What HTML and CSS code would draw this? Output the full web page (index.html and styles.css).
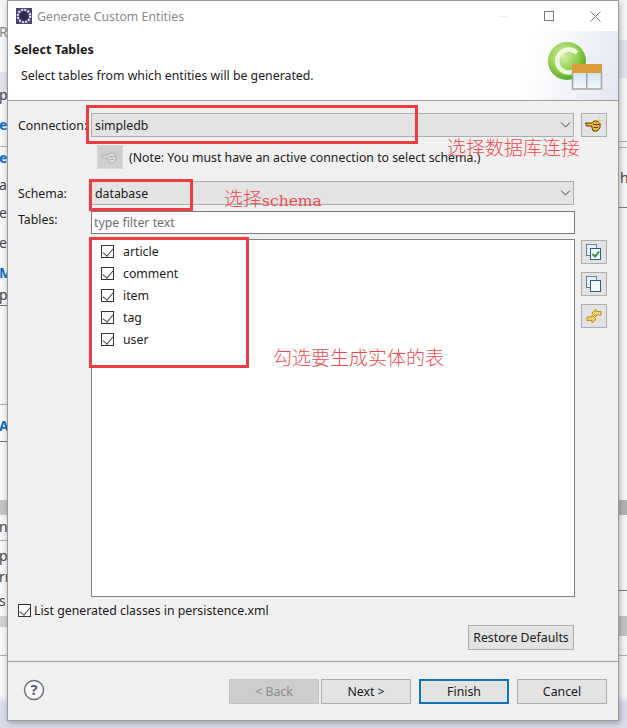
FILE: index.html
```html
<!DOCTYPE html>
<html lang="en">

<head>
    <meta charset="UTF-8">
    <title>Generate Custom Entities</title>
    <link rel="stylesheet" href="styles.css">
</head>

<body>
    <!-- bits of the IDE behind the dialog -->
    <div class="backdrop">
        <div class="band l1"></div>
        <div class="band l2"></div>
        <div class="band l3"></div>
        <div class="band r1"></div>
        <div class="band r2"></div>
        <div class="band r3"></div>
        <div class="rule rl1"></div>
        <div class="rule rl2"></div>
        <div class="rule rl3"></div>
        <div class="rule rl4"></div>
        <div class="rule rl5"></div>
        <div class="rule rl6"></div>
        <div class="rule rr1"></div>
        <div class="rule rr2"></div>
        <div class="rule rr3"></div>
        <div class="rule rr4"></div>
        <div class="rule rr5"></div>
        <span class="bg-text t1">Ru</span>
        <span class="bg-text t2">p</span>
        <span class="bg-text blue t3">er</span>
        <span class="bg-text blue t4">er</span>
        <span class="bg-text t5">a</span>
        <span class="bg-text t6">er</span>
        <span class="bg-text t7">es</span>
        <span class="bg-text blue t8">M</span>
        <span class="bg-text t9">p</span>
        <span class="bg-text blue t10">Al</span>
        <span class="bg-text t11">n</span>
        <span class="bg-text t12">p</span>
        <span class="bg-text t13">rr</span>
        <span class="bg-text t14">s</span>
        <span class="bg-text t15">hi</span>
    </div>

    <div class="window">
        <div class="titlebar">
            <svg class="app-icon" width="16" height="16" viewBox="0 0 16 16">
                <rect width="16" height="16" fill="#4a4470" />
                <circle cx="8" cy="8" r="6.2" fill="none" stroke="#e8e8ee" stroke-width="2" stroke-dasharray="2 1.2" />
                <circle cx="8" cy="8" r="4.2" fill="#2c2a50" />
            </svg>
            <span class="title">Generate Custom Entities</span>
            <div class="window-controls">
                <span class="minimize"></span>
                <span class="maximize"></span>
                <svg width="11" height="11" viewBox="0 0 11 11">
                    <path d="M0.5 0.5 L10.5 10.5 M10.5 0.5 L0.5 10.5" stroke="#777" fill="none" />
                </svg>
            </div>
        </div>

        <div class="header">
            <div class="header-text">
                <h1>Select Tables</h1>
                <p>Select tables from which entities will be generated.</p>
            </div>
            <svg class="wizard-icon" width="58" height="50" viewBox="0 0 58 50">
                <defs>
                    <radialGradient id="ball" cx="0.4" cy="0.35" r="0.7">
                        <stop offset="0" stop-color="#d8f0b0" />
                        <stop offset="0.6" stop-color="#8ccd48" />
                        <stop offset="1" stop-color="#4f9f22" />
                    </radialGradient>
                    <linearGradient id="cell" x1="0" y1="0" x2="0" y2="1">
                        <stop offset="0" stop-color="#cfe4f4" />
                        <stop offset="1" stop-color="#f2f7fb" />
                    </linearGradient>
                </defs>
                <circle cx="20" cy="20" r="19" fill="url(#ball)" />
                <path d="M30 12 A11.5 11.5 0 1 0 30 28" fill="none" stroke="#eef9dc" stroke-width="4.5" />
                <rect x="25.5" y="31" width="29" height="17" fill="url(#cell)" stroke="#a5a59c" stroke-width="1.5" />
                <rect x="25" y="23" width="30" height="9" fill="#dd9c3c" />
                <rect x="39" y="32" width="1.5" height="16" fill="#a5a59c" />
            </svg>
        </div>

        <div class="content">
            <div class="form-row connection-row">
                <label>Connection:</label>
                <div class="combo">simpledb<svg class="chevron" width="11" height="6" viewBox="0 0 11 6"><path d="M1 0.5 L5.5 5 L10 0.5" fill="none" stroke="#444" /></svg></div>
                <button class="icon-btn">
                    <svg width="18" height="14" viewBox="0 0 18 14">
                        <path d="M0.5 5 H7 L9 3 H12 L15 5 V10 L12 13 H8 L6.5 8 H1.5 Z" fill="#ecb82e" stroke="#5a3d05" />
                        <path d="M8 6.5 H14 M8.5 9.5 H13" stroke="#5a3d05" />
                        <path d="M14.5 0 V5 M12 2.5 H17" stroke="#f6d860" />
                    </svg>
                </button>
            </div>
            <div class="note-row">
                <button class="icon-btn disabled">
                    <svg width="18" height="14" viewBox="0 0 18 14">
                        <path d="M0.5 5 H7 L9 3 H12 L15 5 V10 L12 13 H8 L6.5 8 H1.5 Z" fill="#dadada" stroke="#b0b0b0" />
                        <path d="M8 6.5 H14 M8.5 9.5 H13" stroke="#b0b0b0" />
                    </svg>
                </button>
                <span>(Note: You must have an active connection to select schema.)</span>
            </div>
            <div class="form-row schema-row">
                <label>Schema:</label>
                <div class="combo">database<svg class="chevron" width="11" height="6" viewBox="0 0 11 6"><path d="M1 0.5 L5.5 5 L10 0.5" fill="none" stroke="#444" /></svg></div>
            </div>
            <div class="form-row filter-row">
                <label>Tables:</label>
                <div class="filter-input">type filter text</div>
            </div>
            <div class="tables-row">
                <div class="table-list">
                    <div class="table-item"><span class="check"></span>article</div>
                    <div class="table-item"><span class="check"></span>comment</div>
                    <div class="table-item"><span class="check"></span>item</div>
                    <div class="table-item"><span class="check"></span>tag</div>
                    <div class="table-item"><span class="check"></span>user</div>
                </div>
                <div class="side-buttons">
                    <button class="icon-btn">
                        <svg width="18" height="18" viewBox="0 0 18 18">
                            <rect x="1.5" y="1.5" width="10" height="11" fill="#e8f0f8" stroke="#5f7f9f" />
                            <rect x="5.5" y="5.5" width="10" height="11" fill="#f4f8fb" stroke="#35597c" />
                            <path d="M7.5 11 L10 13.5 L14 8.5" fill="none" stroke="#2f9a2f" stroke-width="2" />
                        </svg>
                    </button>
                    <button class="icon-btn">
                        <svg width="18" height="18" viewBox="0 0 18 18">
                            <rect x="1.5" y="1.5" width="10" height="11" fill="#e8f0f8" stroke="#5f7f9f" />
                            <rect x="5.5" y="5.5" width="10" height="11" fill="#f4f8fb" stroke="#35597c" />
                        </svg>
                    </button>
                    <button class="icon-btn">
                        <svg width="18" height="18" viewBox="0 0 18 18">
                            <path d="M7 6 L11 2 V4.5 H16 V8 H11 V10 Z" fill="#f3d368" stroke="#b98f1e" />
                            <path d="M11 12 L7 16 V13.5 H2 V10 H7 V8 Z" fill="#f3d368" stroke="#b98f1e" />
                        </svg>
                    </button>
                </div>
            </div>
            <div class="persist-row"><span class="check"></span>List generated classes in persistence.xml</div>
            <div class="restore-row"><button class="btn">Restore Defaults</button></div>
        </div>

        <div class="footer">
            <svg width="22" height="22" viewBox="0 0 22 22">
                <circle cx="11" cy="11" r="9.5" fill="#f7f7f9" stroke="#6f7480" stroke-width="1.5" />
                <text class="help-mark" x="11" y="16" text-anchor="middle">?</text>
            </svg>
            <div class="footer-buttons">
                <button class="btn btn-disabled">&lt; Back</button>
                <button class="btn">Next &gt;</button>
                <button class="btn btn-default">Finish</button>
                <button class="btn">Cancel</button>
            </div>
        </div>
    </div>

    <!-- screenshot annotations -->
    <div class="mark mark-connection"></div>
    <div class="mark mark-schema"></div>
    <div class="mark mark-tables"></div>
    <span class="note-red note-connection">选择数据库连接</span>
    <span class="note-red note-schema">选择<span class="latin">schema</span></span>
    <span class="note-red note-tables">勾选要生成实体的表</span>
</body>

</html>
```

FILE: styles.css
```css
* {
    box-sizing: border-box;
}

body {
    margin: 0;
    width: 627px;
    height: 728px;
    font-family: 'Noto Sans', sans-serif;
    font-size: 12.3px;
    color: #1a1a1a;
    position: relative;
    overflow: hidden;
}

.backdrop {
    position: absolute;
    inset: 0;
    background: linear-gradient(#f7f7f9 0, #f7f7f9 696px, #d9dcea 704px);
}

.band {
    position: absolute;
    width: 9px;
    background-color: #c4c4c6;
}

.l1 { left: 0; top: 72px; height: 26px; background-color: #e4e5ea; }
.l2 { left: 0; top: 500px; height: 15px; }
.l3 { left: 0; top: 616px; height: 11px; background-color: #d2d2d2; }
.r1 { right: 0; top: 40px; height: 38px; background-color: #e2e5ef; }
.r2 { right: 0; top: 500px; height: 15px; background-color: #b4b4b4; }
.r3 { right: 0; top: 616px; height: 20px; background-color: #c4c4c4; }

.rule {
    position: absolute;
    width: 9px;
    height: 1px;
    background-color: #b0b0b0;
}

.rl1 { left: 0; top: 146px; }
.rl2 { left: 0; top: 305px; background-color: #777; }
.rl3 { left: 0; top: 404px; }
.rl4 { left: 0; top: 441px; background-color: #777; }
.rl5 { left: 0; top: 540px; }
.rl6 { left: 0; top: 655px; }
.rr1 { right: 0; top: 141px; }
.rr2 { right: 0; top: 147px; }
.rr3 { right: 0; top: 207px; background-color: #777; }
.rr4 { right: 0; top: 590px; background-color: #777; }
.rr5 { right: 0; top: 655px; }

.bg-text {
    position: absolute;
    left: -1px;
    font-size: 14px;
    line-height: 18px;
    color: #444;
}

.bg-text.blue {
    color: #0b6fc2;
    font-weight: bold;
}

.t1 { top: 23px; color: #888; }
.t2 { top: 86px; }
.t3 { top: 116px; }
.t4 { top: 149px; }
.t5 { top: 176px; }
.t6 { top: 204px; }
.t7 { top: 234px; }
.t8 { top: 264px; }
.t9 { top: 286px; }
.t10 { top: 417px; }
.t11 { top: 518px; }
.t12 { top: 547px; }
.t13 { top: 568px; }
.t14 { top: 592px; }
.t15 { top: 169px; left: 620px; }

.window {
    position: relative;
    margin-left: 7px;
    width: 612px;
    height: 721px;
    background-color: #f0f0f0;
    border: 1px solid #9a9a9a;
    box-shadow: 1px 2px 6px rgba(60, 60, 70, 0.4);
    display: flex;
    flex-direction: column;
}

.titlebar {
    height: 30px;
    flex-shrink: 0;
    background-color: white;
    display: flex;
    align-items: center;
    padding-left: 8px;
}

.app-icon {
    margin-right: 5px;
}

.title {
    color: #8a8a8a;
}

.window-controls {
    margin-left: auto;
    display: flex;
    align-items: center;
    gap: 36px;
    padding-right: 17px;
}

.minimize {
    width: 10px;
    height: 1px;
    background-color: #eee;
}

.maximize {
    width: 10px;
    height: 10px;
    border: 1px solid #777;
}

.header {
    height: 70px;
    flex-shrink: 0;
    background: linear-gradient(105deg, white 84%, #e3e7f1 100%);
    border-bottom: 1px solid #a0a0a0;
    display: flex;
    justify-content: space-between;
}

.header-text {
    padding-left: 6px;
}

.header-text h1 {
    margin: 10px 0 0;
    font-size: 12.5px;
    line-height: 17px;
    font-weight: bold;
}

.header-text p {
    margin: 9px 0 0 7px;
    line-height: 17px;
}

.wizard-icon {
    margin: 10px 13px 0 0;
}

.content {
    flex: 1;
    padding: 12px 0 0 10px;
    display: flex;
    flex-direction: column;
}

.form-row {
    display: flex;
    align-items: center;
}

.form-row label {
    width: 73px;
    flex-shrink: 0;
}

.combo {
    width: 483px;
    height: 24px;
    background-color: #e3e3e3;
    border: 1px solid #adadad;
    padding: 0 2px 0 3px;
    display: flex;
    align-items: center;
    justify-content: space-between;
}

.icon-btn {
    width: 26px;
    height: 24px;
    padding: 0;
    background-color: #e3e3e3;
    border: 1px solid #adadad;
    display: flex;
    align-items: center;
    justify-content: center;
}

.icon-btn.disabled {
    background-color: #cfcfcf;
    border-color: #d8d8d8;
}

.connection-row .icon-btn {
    margin-left: 7px;
}

.note-row {
    margin: 8px 0 0 79px;
    display: flex;
    align-items: center;
    gap: 6px;
}

.schema-row {
    margin-top: 12px;
}

.filter-row {
    margin-top: 6px;
}

/* the label sits a little above the centre of its field */
.filter-row label {
    margin-bottom: 6px;
}

.filter-input {
    width: 484px;
    height: 23px;
    background-color: white;
    border: 1px solid #7a7a7a;
    padding-left: 2px;
    line-height: 21px;
    color: #6d6d6d;
}

.tables-row {
    margin: 5px 0 0 73px;
    display: flex;
    gap: 6px;
}

.table-list {
    width: 484px;
    height: 358px;
    background-color: white;
    border: 1px solid #828282;
    padding-left: 9px;
}

.table-item {
    height: 22px;
    display: flex;
    align-items: center;
}

.check {
    width: 13px;
    height: 13px;
    flex-shrink: 0;
    border: 1px solid #333;
    background-color: white;
    position: relative;
}

/* tick made from two borders */
.check::after {
    content: '';
    position: absolute;
    left: 3px;
    top: 0;
    width: 5px;
    height: 9px;
    border-right: 1.5px solid #444;
    border-bottom: 1.5px solid #444;
    transform: rotate(40deg);
}

.table-item .check {
    margin-right: 9px;
}

.side-buttons {
    margin-top: 1px;
    display: flex;
    flex-direction: column;
    gap: 8px;
}

.persist-row {
    margin-top: 6px;
    height: 15px;
    display: flex;
    align-items: center;
    gap: 3px;
}

.restore-row {
    margin: 7px 44px 0 0;
    display: flex;
    justify-content: flex-end;
}

.btn {
    height: 25px;
    width: 90px;
    padding: 0;
    background-color: #e3e3e3;
    border: 1px solid #adadad;
    font-family: inherit;
    font-size: 12.3px;
    color: #1a1a1a;
}

.restore-row .btn {
    width: 106px;
}

.btn-disabled {
    background-color: #cdcdcd;
    border-color: #c4c4c4;
    color: #8c8c8c;
}

.btn-default {
    border: 2px solid #0f74bd;
}

.footer {
    height: 59px;
    flex-shrink: 0;
    border-top: 1px solid #a0a0a0;
    display: flex;
    align-items: flex-start;
    justify-content: space-between;
    padding: 17px 11px 0 15px;
}

.help-mark {
    font-size: 15px;
    font-weight: bold;
    fill: #5f6470;
    font-family: 'Noto Sans', sans-serif;
}

.footer-buttons {
    display: flex;
    gap: 2px;
}

.footer-buttons .btn-default {
    margin: 0 6px;
}

.mark {
    position: absolute;
    border: 3px solid #ee3d42;
}

.mark-connection { left: 86px; top: 105px; width: 332px; height: 39px; }
.mark-schema { left: 89px; top: 179px; width: 104px; height: 32px; }
.mark-tables { left: 89px; top: 237px; width: 160px; height: 131px; }

.note-red {
    position: absolute;
    font-family: 'Noto Sans CJK SC', sans-serif;
    font-size: 19px;
    font-weight: 300;
    line-height: 24px;
    color: #ee4a4e;
}

.note-connection { left: 447px; top: 135px; }
.note-schema { left: 224px; top: 186px; }
.note-tables { left: 273px; top: 345px; }

.latin {
    font-family: 'DejaVu Serif', serif;
    font-size: 15.5px;
}
```
